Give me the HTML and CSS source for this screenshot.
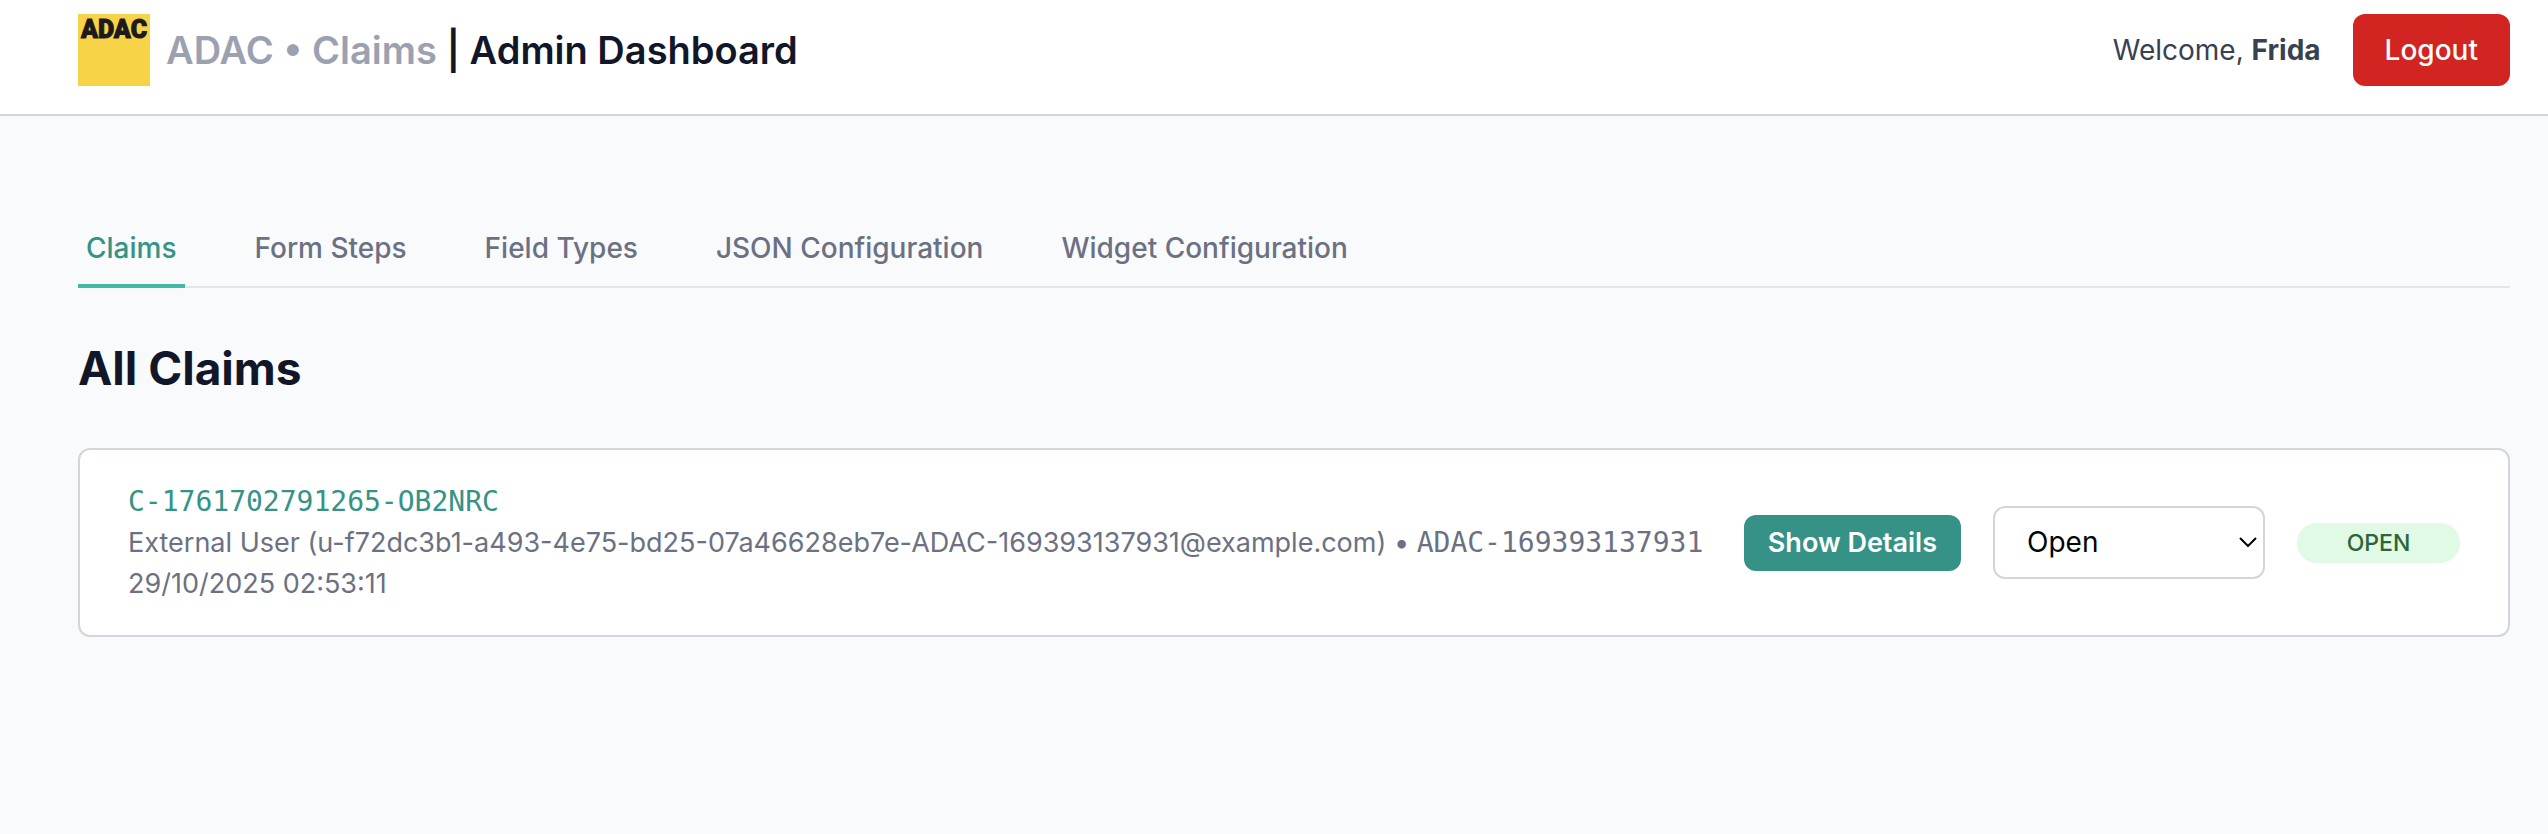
FILE: index.html
```html
<!DOCTYPE html>
<html lang="en">
<head>
<meta charset="utf-8">
<meta name="viewport" content="width=device-width, initial-scale=1">
<title>ADAC Claims | Admin Dashboard</title>
<link rel="stylesheet" href="styles.css">
</head>
<body>
<header class="topbar">
  <div class="brand">
    <svg class="logo" viewBox="0 0 72 72" role="img" aria-label="ADAC">
      <rect width="72" height="72" fill="#f7d348"/>
      <text class="logo-text" x="36" y="24" text-anchor="middle">ADAC</text>
    </svg>
    <h1 class="title"><span class="title-muted">ADAC • Claims</span> | Admin Dashboard</h1>
  </div>
  <div class="account">
    <span class="welcome">Welcome, <strong>Frida</strong></span>
    <button class="logout" type="button">Logout</button>
  </div>
</header>
<main class="page">
  <nav class="tabs" aria-label="Sections">
    <a class="tab tab-active" href="#claims" aria-current="page">Claims</a>
    <a class="tab" href="#steps">Form Steps</a>
    <a class="tab" href="#fields">Field Types</a>
    <a class="tab" href="#json">JSON Configuration</a>
    <a class="tab" href="#widget">Widget Configuration</a>
  </nav>
  <h2 class="heading">All Claims</h2>
  <article class="claim">
    <div class="claim-info">
      <p class="claim-id">C-1761702791265-OB2NRC</p>
      <p>External User (u-f72dc3b1-a493-4e75-bd25-07a46628eb7e-ADAC-169393137931@example.com) • <span class="mono">ADAC-169393137931</span></p>
      <p>29/10/2025 02:53:11</p>
    </div>
    <div class="claim-actions">
      <button class="details" type="button">Show Details</button>
      <div class="status">
        <select class="status-select" aria-label="Claim status">
          <option selected>Open</option>
          <option>Closed</option>
        </select>
        <svg class="chevron" viewBox="0 0 18 10" aria-hidden="true"><path d="M1 1l8 8 8-8" fill="none" stroke="#000" stroke-width="2"/></svg>
      </div>
      <span class="badge">OPEN</span>
    </div>
  </article>
</main>
</body>
</html>
```
FILE: styles.css
```css
* {
  box-sizing: border-box;
}

body {
  margin: 0;
  min-height: 100vh;
  background: #f9fafc;
  color: #111728;
  font-family: Inter, "Liberation Sans", sans-serif;
  font-size: 28px;
  line-height: 40px;
}

h1, h2, p {
  margin: 0;
}

button, select {
  font: inherit;
}

.topbar {
  display: flex;
  justify-content: space-between;
  align-items: center;
  padding: 14px 38px 28px 78px;
  background: #fff;
  border-bottom: 2px solid #d2d5dc;
}

.brand {
  display: flex;
  align-items: center;
  gap: 16px;
}

.logo {
  display: block;
  width: 72px;
  height: 72px;
}

.logo-text {
  font-family: Roboto, "Liberation Sans", sans-serif;
  font-size: 25px;
  font-weight: 900;
  fill: #1d1a1b;
  stroke: #1d1a1b;
  stroke-width: 1px;
}

.title {
  font-size: 38px;
  font-weight: 600;
  line-height: 48px;
}

.title-muted {
  color: #9ca1b0;
}

.account {
  display: flex;
  align-items: center;
  gap: 32px;
  color: #384152;
}

.logout {
  padding: 16px 32px;
  border: 0;
  border-radius: 12px;
  background: #d22420;
  color: #fff;
  font-weight: 500;
}

.page {
  padding: 96px 38px 48px 78px;
}

.tabs {
  display: flex;
  gap: 62px;
  box-shadow: inset 0 -2px #e4e7ea;
}

.tab {
  padding: 16px 8px;
  border-bottom: 4px solid transparent;
  color: #6b7183;
  font-weight: 500;
  text-decoration: none;
}

.tab-active {
  border-color: #45b8a5;
  color: #359386;
}

.heading {
  margin: 48px 0;
  font-size: 46px;
  font-weight: 700;
  line-height: 64px;
}

.claim {
  display: flex;
  justify-content: space-between;
  align-items: center;
  padding: 31px 48px;
  border: 2px solid #d2d5dc;
  border-radius: 12px;
  background: #fff;
}

.claim-info {
  color: #6b7183;
  font-size: 27px;
  line-height: 41px;
  white-space: nowrap;
}

.claim-id, .mono {
  font-family: "DejaVu Sans Mono", monospace;
  font-size: 28px;
}

.claim-id {
  color: #359386;
}

.mono {
  line-height: 1;
}

.claim-actions {
  display: flex;
  align-items: center;
  gap: 32px;
}

.details {
  padding: 8px 24px;
  border: 0;
  border-radius: 12px;
  background: #369286;
  color: #fff;
  font-size: 27px;
  font-weight: 600;
  white-space: nowrap;
}

.status {
  position: relative;
}

.status-select {
  appearance: none;
  display: block;
  width: 272px;
  padding: 14px 32px;
  border: 2px solid #d2d5dc;
  border-radius: 12px;
  background: #fff;
  color: #000;
  line-height: 41px;
}

.chevron {
  position: absolute;
  top: 31px;
  right: 8px;
  width: 18px;
  height: 10px;
  pointer-events: none;
}

.badge {
  width: 163px;
  border-radius: 20px;
  background: #e0fae6;
  color: #2d6539;
  font-size: 23px;
  font-weight: 500;
  text-align: center;
}
```
